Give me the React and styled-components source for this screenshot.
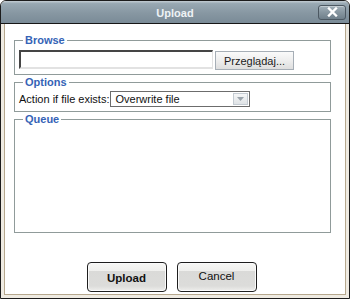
import styled, { createGlobalStyle } from "styled-components";

const GlobalStyle = createGlobalStyle`
  html, body {
    margin: 0;
    padding: 0;
    background: #ffffff;
  }
  body {
    font-family: "Liberation Sans", Arial, sans-serif;
    font-size: 11px;
    color: #111;
  }
`;

const Window = styled.div`
  width: 350px;
  height: 299px;
  box-sizing: border-box;
  display: flex;
  flex-direction: column;
  border: 1px solid #1c1c1c;
  border-radius: 6px 6px 0 0;
  overflow: hidden;
  background: #efebe2;
`;

const TitleBar = styled.div`
  height: 22px;
  flex-shrink: 0;
  display: grid;
  grid-template-columns: 1fr auto 1fr;
  align-items: center;
  background: linear-gradient(#c3cdd3 0%, #98a8b2 12%, #8797a2 55%, #7a8b97 100%);
  border-bottom: 1px solid #161616;
`;

const Title = styled.div`
  grid-column: 2;
  color: #eef2f5;
  font-weight: bold;
  font-size: 11px;
  padding-top: 1px;
`;

const CloseButton = styled.button`
  grid-column: 3;
  justify-self: end;
  margin-right: 3px;
  width: 28px;
  height: 15px;
  padding: 0;
  border: 1px solid #4c5862;
  border-radius: 3px;
  background: linear-gradient(#a2b0b9 0%, #86959f 50%, #6f7f8a 100%);
  box-shadow: inset 0 1px 0 rgba(255, 255, 255, 0.35);
  display: flex;
  align-items: center;
  justify-content: center;
  cursor: pointer;
`;

const Frame = styled.div`
  flex: 1;
  display: flex;
  padding: 0 3px 3px 3px;
`;

const Panel = styled.div`
  flex: 1;
  display: flex;
  flex-direction: column;
  background: #ffffff;
  border: 1px solid #b6a88e;
  border-top: none;
  padding: 10px 14px 0 9px;
`;

const Group = styled.fieldset`
  margin: 0 0 1px 0;
  padding: ${(p) => p.$pad || "3px 4px 4px 4px"};
  border: 1px solid #909b9a;
  height: ${(p) => p.$height || "auto"};
  box-sizing: border-box;
`;

const Legend = styled.legend`
  margin-left: 4px;
  padding: 0 2px;
  font-weight: bold;
  font-size: 11px;
  line-height: 13px;
  color: #3563b6;
`;

const Row = styled.div`
  display: flex;
  align-items: flex-start;
`;

const FileInput = styled.div`
  width: 194px;
  height: 19px;
  box-sizing: border-box;
  border-top: 2px solid #454545;
  border-left: 2px solid #454545;
  border-right: 1px solid #e2e2e2;
  border-bottom: 2px solid #e2e2e2;
  background: #fff;
`;

const BrowseButton = styled.button`
  margin: 1px 0 0 2px;
  width: 79px;
  height: 19px;
  padding: 0;
  border: 1px solid #a6aeb6;
  background: linear-gradient(#fafafa 0%, #eeeeee 50%, #dedede 100%);
  font-family: "Liberation Sans", Arial, sans-serif;
  font-size: 11px;
  color: #1a1a1a;
`;

const Label = styled.span`
  line-height: 16px;
  white-space: nowrap;
`;

const Select = styled.div`
  margin-left: 1px;
  width: 140px;
  height: 16px;
  box-sizing: border-box;
  border: 1px solid #6c6c6c;
  display: flex;
  align-items: center;
  justify-content: space-between;
  padding: 0 1px 0 4px;
  line-height: 14px;
`;

const SelectArrow = styled.span`
  width: 15px;
  height: 12px;
  box-sizing: border-box;
  border: 1px solid #c4cbd2;
  background: linear-gradient(#f5f6f7, #dfe3e6);
  display: flex;
  align-items: center;
  justify-content: center;
`;

const ButtonRow = styled.div`
  display: flex;
  justify-content: center;
  gap: 10px;
  margin-top: 28px;
  padding-right: 2px;
`;

const DialogButton = styled.button`
  width: 80px;
  height: 30px;
  padding: ${(p) => (p.$primary ? "2px 0 0 0" : "0 0 2px 0")};
  border: 1px solid #1e1e1e;
  border-radius: 4px;
  background: linear-gradient(
    #f7f7f5 0%,
    #efefed 28%,
    #dadad8 30%,
    #dcdcda 82%,
    #eeeeec 100%
  );
  box-shadow: inset 0 0 0 1px #fafafa;
  font-family: "Liberation Sans", Arial, sans-serif;
  font-size: 11.5px;
  font-weight: ${(p) => (p.$primary ? "bold" : "normal")};
  color: #111;
`;

export default function App() {
  return (
    <>
      <GlobalStyle />
      <Window>
        <TitleBar>
          <Title>Upload</Title>
          <CloseButton aria-label="Close">
            <svg width="11" height="10" viewBox="0 0 11 10">
              <path d="M2 1.5 L9 8.5 M9 1.5 L2 8.5" stroke="#ffffff" strokeWidth="2.4" strokeLinecap="square" />
            </svg>
          </CloseButton>
        </TitleBar>
        <Frame>
          <Panel>
            <Group>
              <Legend>Browse</Legend>
              <Row>
                <FileInput />
                <BrowseButton>Przeglądaj...</BrowseButton>
              </Row>
            </Group>
            <Group $pad="2px 4px 4px 4px">
              <Legend>Options</Legend>
              <Row>
                <Label>Action if file exists:</Label>
                <Select>
                  <span>Overwrite file</span>
                  <SelectArrow>
                    <svg width="7" height="4" viewBox="0 0 7 4">
                      <path d="M0 0 L7 0 L3.5 4 Z" fill="#9aa3ab" />
                    </svg>
                  </SelectArrow>
                </Select>
              </Row>
            </Group>
            <Group $height="120px">
              <Legend>Queue</Legend>
            </Group>
            <ButtonRow>
              <DialogButton $primary>Upload</DialogButton>
              <DialogButton>Cancel</DialogButton>
            </ButtonRow>
          </Panel>
        </Frame>
      </Window>
    </>
  );
}
